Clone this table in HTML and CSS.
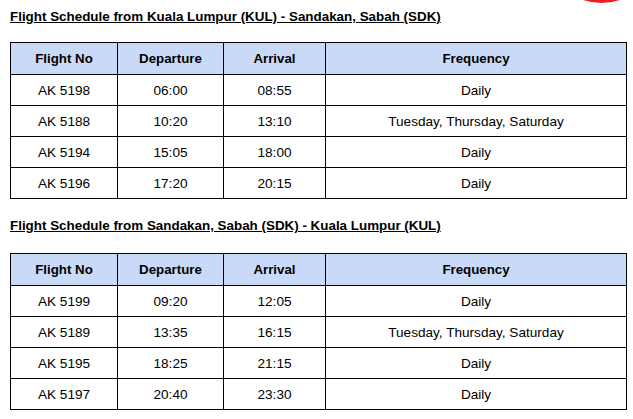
FILE: index.html
```html
<!DOCTYPE html>
<html>
<head>
<meta charset="utf-8">
<link rel="stylesheet" href="styles.css">
</head>
<body>
<div class="page">
  <div class="logo-blob"></div>
  <h2 class="title title-first">Flight Schedule from Kuala Lumpur (KUL) - Sandakan, Sabah (SDK)</h2>
  <table class="sched">
    <thead>
      <tr><th class="c1">Flight No</th><th class="c2">Departure</th><th class="c3">Arrival</th><th class="c4">Frequency</th></tr>
    </thead>
    <tbody>
      <tr><td>AK 5198</td><td>06:00</td><td>08:55</td><td>Daily</td></tr>
      <tr><td>AK 5188</td><td>10:20</td><td>13:10</td><td>Tuesday, Thursday, Saturday</td></tr>
      <tr><td>AK 5194</td><td>15:05</td><td>18:00</td><td>Daily</td></tr>
      <tr><td>AK 5196</td><td>17:20</td><td>20:15</td><td>Daily</td></tr>
    </tbody>
  </table>
  <h2 class="title title-second">Flight Schedule from Sandakan, Sabah (SDK) - Kuala Lumpur (KUL)</h2>
  <table class="sched">
    <thead>
      <tr><th class="c1">Flight No</th><th class="c2">Departure</th><th class="c3">Arrival</th><th class="c4">Frequency</th></tr>
    </thead>
    <tbody>
      <tr><td>AK 5199</td><td>09:20</td><td>12:05</td><td>Daily</td></tr>
      <tr><td>AK 5189</td><td>13:35</td><td>16:15</td><td>Tuesday, Thursday, Saturday</td></tr>
      <tr><td>AK 5195</td><td>18:25</td><td>21:15</td><td>Daily</td></tr>
      <tr><td>AK 5197</td><td>20:40</td><td>23:30</td><td>Daily</td></tr>
    </tbody>
  </table>
</div>
</body>
</html>
```

FILE: styles.css
```css
html, body {
  margin: 0;
  padding: 0;
  background: #ffffff;
}
.page {
  position: relative;
  width: 633px;
  height: 419px;
  overflow: hidden;
  padding: 9px 0 0 10px;
  box-sizing: border-box;
  font-family: "Liberation Sans", Arial, sans-serif;
  color: #000;
}
.logo-blob {
  position: absolute;
  left: 543px;
  top: -114px;
  width: 117px;
  height: 117px;
  border-radius: 50%;
  background: #ee1c25;
}
.title {
  margin: 0;
  font-size: 13.4px;
  line-height: 15px;
  font-weight: bold;
  text-decoration: underline;
  text-underline-offset: 1px;
}
.title-first {
  margin-bottom: 18px;
}
.title-second {
  margin-top: 19px;
  margin-bottom: 20px;
}
.sched {
  border-collapse: collapse;
  width: 617px;
  table-layout: fixed;
  font-size: 13.6px;
}
.sched th, .sched td {
  border: 1px solid #000;
  text-align: center;
  padding: 0;
  height: 30px;
}
.sched th {
  background: #c9daf8;
  font-weight: bold;
  font-size: 13.3px;
  height: 31px;
}
.c1 { width: 106px; }
.c2 { width: 105px; }
.c3 { width: 101px; }
.c4 { width: auto; }
```
